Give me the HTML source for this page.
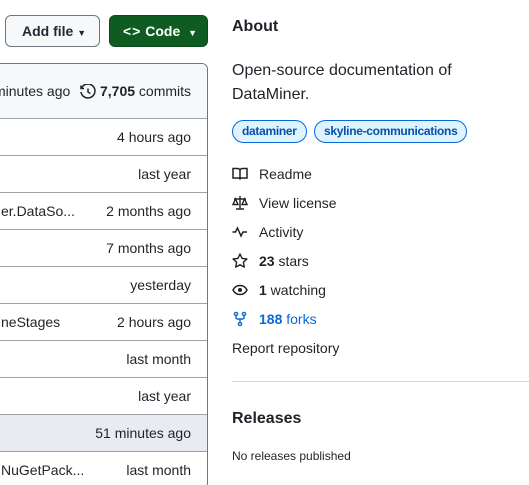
<!DOCTYPE html>
<html style="width:529px;height:485px;overflow:hidden"><head><meta charset="utf-8"><style>
*{box-sizing:border-box;margin:0;padding:0}
body{width:529px;height:485px;overflow:hidden;background:#fff;font-family:"Liberation Sans",sans-serif;color:#1f2328;font-size:14px;position:relative}
.a{position:absolute;white-space:nowrap}
.btn{position:absolute;top:15px;height:32px;border-radius:6px;font-weight:bold;font-size:14px;line-height:30px}
.box{position:absolute;left:-10px;top:63px;width:218px;height:426px;border:1px solid #6e7781;border-radius:6px;overflow:hidden}
.row{position:absolute;left:0;width:216px;height:37px;border-top:1px solid #9ba3ab;font-size:14px;line-height:36px}
.row .t{position:absolute;right:16px}
.row .l{position:absolute;left:10px}
.it{position:absolute;left:232px;font-size:14px;line-height:18px}
.it svg{position:absolute;left:0;top:1px}
.it span{position:absolute;left:27px;white-space:nowrap}
.tag{position:absolute;top:120px;height:23px;padding:0 9px;border:1px solid #0969da;border-radius:12px;background:#ddf4ff;font-size:12px;font-weight:bold;line-height:21px;color:#0550ae;letter-spacing:-0.3px;white-space:nowrap}
</style></head><body>
<div class="btn" style="left:5px;width:95px;background:#f6f8fa;border:1px solid #6e7781;color:#25292e;padding-left:16px">Add file <span style="font-size:9px">▼</span></div>
<div class="btn" style="left:109px;width:99px;background:#0f5c23;border:1px solid #0c4a1c;color:#fff;padding-left:13px"><span style="letter-spacing:1px">&lt;&gt;</span> Code <span style="font-size:9px;margin-left:4px">▼</span></div>
<div class="box">
 <div style="position:absolute;left:0;top:0;width:216px;height:54px;background:#f6f8fa"></div>
 <div class="a" style="left:3px;top:19px">minutes ago</div>
 <svg class="a" style="left:89px;top:20px" width="16" height="16" viewBox="0 0 16 16"><path d="M1.6 4A7 7 0 1 1 1 8" fill="none" stroke="#1f2328" stroke-width="1.5"/><path d="M1 1.5v3h3" fill="none" stroke="#1f2328" stroke-width="1.5"/><path d="M8 4.5V8l2.3 1.5" fill="none" stroke="#1f2328" stroke-width="1.5"/></svg>
 <div class="a" style="left:109px;top:19px"><b>7,705</b> commits</div>
 <div class="row" style="top:54px"><span class="t">4 hours ago</span></div>
 <div class="row" style="top:91px"><span class="t">last year</span></div>
 <div class="row" style="top:128px"><span class="l">er.DataSo...</span><span class="t">2 months ago</span></div>
 <div class="row" style="top:165px"><span class="t">7 months ago</span></div>
 <div class="row" style="top:202px"><span class="t">yesterday</span></div>
 <div class="row" style="top:239px"><span class="l">neStages</span><span class="t">2 hours ago</span></div>
 <div class="row" style="top:276px"><span class="t">last month</span></div>
 <div class="row" style="top:313px"><span class="t">last year</span></div>
 <div class="row" style="top:350px;background:#e8ecf0"><span class="t">51 minutes ago</span></div>
 <div class="row" style="top:387px"><span class="l">NuGetPack...</span><span class="t">last month</span></div>
</div>
<div class="a" style="left:232px;top:18px;font-size:16px;font-weight:bold">About</div>
<div class="a" style="left:232px;top:59px;font-size:16px;line-height:24px">Open-source documentation of<br>DataMiner.</div>
<div class="tag" style="left:232px">dataminer</div>
<div class="tag" style="left:314px">skyline-communications</div>
<div class="it" style="top:165px"><svg width="16" height="16" viewBox="0 0 16 16"><path d="M1 2.5h4.5c1.4 0 2.5.8 2.5 2v9c0-1-1-1.5-2-1.5H1zM15 2.5h-4.5c-1.4 0-2.5.8-2.5 2v9c0-1 1-1.5 2-1.5H15z" fill="none" stroke="#1f2328" stroke-width="1.5"/></svg><span>Readme</span></div>
<div class="it" style="top:194px"><svg width="16" height="16" viewBox="0 0 16 16"><path d="M8 1v13M4 14h8M2 4h12M3.5 4L1 9.5h5zM12.5 4L10 9.5h5z" fill="none" stroke="#1f2328" stroke-width="1.4"/></svg><span>View license</span></div>
<div class="it" style="top:223px"><svg width="16" height="16" viewBox="0 0 16 16"><path d="M0.5 8h3l2-4 3.5 8 2-4h4" fill="none" stroke="#1f2328" stroke-width="1.5"/></svg><span>Activity</span></div>
<div class="it" style="top:252px"><svg width="16" height="16" viewBox="0 0 16 16"><path d="M8 1l2.1 4.4 4.8.6-3.5 3.3.9 4.8L8 11.8l-4.3 2.3.9-4.8L1.1 6l4.8-.6z" fill="none" stroke="#1f2328" stroke-width="1.4" stroke-linejoin="round"/></svg><span><b>23</b> stars</span></div>
<div class="it" style="top:281px"><svg width="16" height="16" viewBox="0 0 16 16"><path d="M1 8c1.5-3 4-4.5 7-4.5s5.5 1.5 7 4.5c-1.5 3-4 4.5-7 4.5S2.5 11 1 8z" fill="none" stroke="#1f2328" stroke-width="1.5"/><circle cx="8" cy="8" r="2" fill="#1f2328"/></svg><span><b>1</b> watching</span></div>
<div class="it" style="top:310px;color:#0969da"><svg width="16" height="16" viewBox="0 0 16 16"><circle cx="4" cy="3" r="1.6" fill="none" stroke="#0969da" stroke-width="1.4"/><circle cx="12" cy="3" r="1.6" fill="none" stroke="#0969da" stroke-width="1.4"/><circle cx="8" cy="13" r="1.6" fill="none" stroke="#0969da" stroke-width="1.4"/><path d="M4 4.6V6.5c0 1 .5 1.5 1.5 1.5h5c1 0 1.5-.5 1.5-1.5V4.6M8 8v3.4" fill="none" stroke="#0969da" stroke-width="1.4"/></svg><span style="color:#0969da"><b>188</b> forks</span></div>
<div class="a" style="left:232px;top:340px">Report repository</div>
<div class="a" style="left:232px;top:381px;width:297px;height:1px;background:#d1d9e0"></div>
<div class="a" style="left:232px;top:410px;font-size:16px;font-weight:bold">Releases</div>
<div class="a" style="left:232px;top:449px;font-size:12px">No releases published</div>
</body></html>
